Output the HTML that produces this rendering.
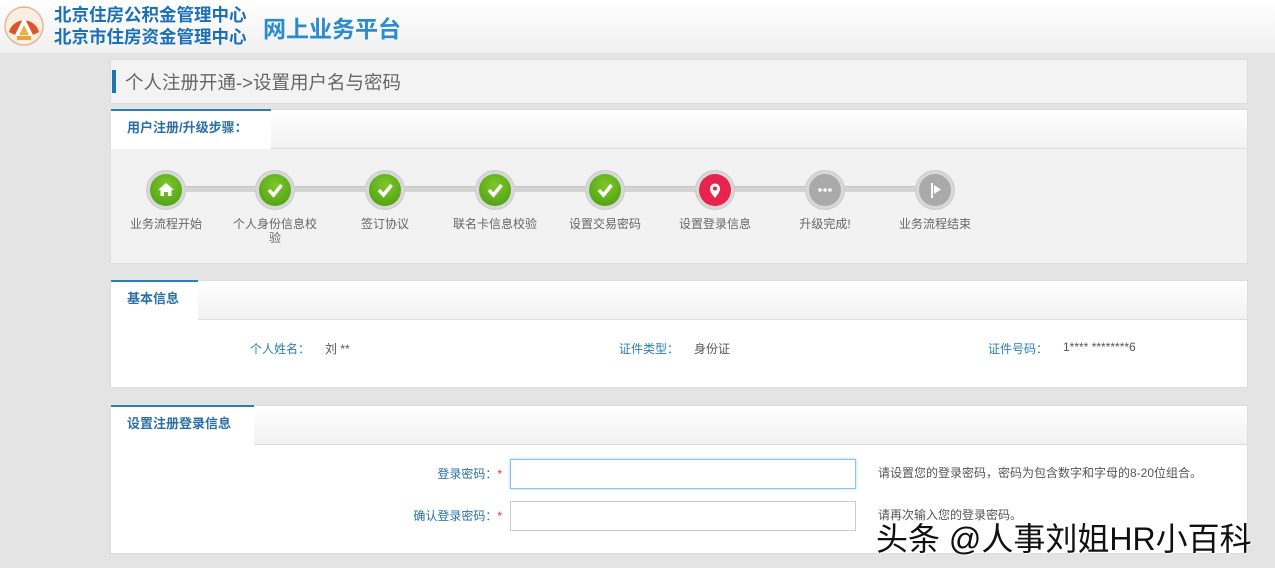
<!DOCTYPE html>
<html><head><meta charset="utf-8"><style>
*{margin:0;padding:0;box-sizing:border-box}
body{width:1275px;height:568px;background:#e4e4e4;font-family:"Liberation Sans","Noto Sans CJK SC",sans-serif;position:relative;overflow:hidden;font-size:12px;color:#555}
.hdr{position:absolute;left:0;top:0;width:1275px;height:54px;background:linear-gradient(#fff,#f0f0f0);border-bottom:1px solid #ddd}
.abs{position:absolute}
.panel{position:absolute;left:110px;width:1138px;background:#fff;border:1px solid #ddd}
.ph{position:absolute;left:0;top:0;right:0;height:39px;background:linear-gradient(#fff,#f2f2f2);border-bottom:1px solid #ddd}
.tab{position:absolute;left:0;top:-1px;height:40px;background:#fff;border-top:2px solid #2a7fb0;color:#2b6fa6;font-weight:bold;font-size:13px;padding:6px 0 0 16px}
.step{position:absolute;top:170px;width:40px;height:40px;border-radius:50%;background:#d8d8d8;border:1px solid #ccc}
.step i{position:absolute;left:3px;top:3px;width:32px;height:32px;border-radius:50%;display:block}
.g{background:radial-gradient(circle at 50% 35%,#7cc82a,#4a9a10)}
.r{background:#e8234d}
.gr{background:#aaa}
.step svg{position:absolute;left:3px;top:3px}
.lbl{position:absolute;top:217px;width:100px;text-align:center;color:#666;font-size:12px;line-height:14px}
.blue{color:#2b7fb5}
input{position:absolute;height:30px;width:346px;border:1px solid #ccc;background:#fff}
</style></head><body>
<div class="hdr">
<svg class="abs" style="left:3px;top:5px" width="42" height="42" viewBox="0 0 42 42"><circle cx="21" cy="21" r="19" fill="#fbeee0" stroke="#e2b79a" stroke-width="1.5"/><path d="M6 27 A15.5 15.5 0 0 1 36 27 L30 30 L21 12 L12 30 Z" fill="#e0522a"/><path d="M12 30 L21 12 L30 30 Z" fill="#fff"/><path d="M16 30 L21 20 L26 30 Z" fill="#e7b340"/><rect x="14" y="31" width="14" height="4" fill="#e5a33a"/></svg>
<div class="abs" style="left:54px;top:4px;font-size:17.5px;font-weight:bold;color:#1b6fb8;line-height:22px">北京住房公积金管理中心<br>北京市住房资金管理中心</div>
<div class="abs" style="left:263px;top:10px;font-size:23px;font-weight:bold;color:#2a8cd0">网上业务平台</div>
</div>
<div class="abs" style="left:110px;top:59px;width:1138px;height:45px;background:#f3f3f3;border:1px solid #ddd"></div>
<div class="abs" style="left:112px;top:70px;width:4px;height:23px;background:#1f74b8"></div>
<div class="abs" style="left:125px;top:69px;font-size:18.5px;color:#666">个人注册开通-&gt;设置用户名与密码</div>

<div class="panel" style="top:109px;height:155px;background:#f2f2f2">
<div class="ph"></div><div class="tab" style="width:160px">用户注册/升级步骤：</div>
</div>
<div class="abs" style="left:166px;top:186px;width:770px;height:6px;background:#d4d4d4;border-top:1px solid #c4c4c4"></div>
<div class="step" style="left:146px"><i class="g"></i><svg width="32" height="32" viewBox="0 0 32 32"><path d="M16 9 L24 16 H21.5 V22 H18 V18 H14 V22 H10.5 V16 H8 Z" fill="#fff"/></svg></div>
<div class="step" style="left:255px"><i class="g"></i><svg width="32" height="32"><path d="M10 16 L14.5 21 L22.5 11" stroke="#fff" stroke-width="3.5" fill="none"/></svg></div>
<div class="step" style="left:365px"><i class="g"></i><svg width="32" height="32"><path d="M10 16 L14.5 21 L22.5 11" stroke="#fff" stroke-width="3.5" fill="none"/></svg></div>
<div class="step" style="left:475px"><i class="g"></i><svg width="32" height="32"><path d="M10 16 L14.5 21 L22.5 11" stroke="#fff" stroke-width="3.5" fill="none"/></svg></div>
<div class="step" style="left:585px"><i class="g"></i><svg width="32" height="32"><path d="M10 16 L14.5 21 L22.5 11" stroke="#fff" stroke-width="3.5" fill="none"/></svg></div>
<div class="step" style="left:695px"><i class="r"></i><svg width="32" height="32"><path d="M16 24 C12 19 11 17 11 14.5 A5 5 0 0 1 21 14.5 C21 17 20 19 16 24 Z" fill="#fff"/><circle cx="16" cy="14.5" r="2" fill="#e8234d"/></svg></div>
<div class="step" style="left:805px"><i class="gr"></i><svg width="32" height="32"><circle cx="11" cy="16" r="1.8" fill="#fff"/><circle cx="16" cy="16" r="1.8" fill="#fff"/><circle cx="21" cy="16" r="1.8" fill="#fff"/></svg></div>
<div class="step" style="left:915px"><i class="gr"></i><svg width="32" height="32"><rect x="12" y="9" width="2" height="15" fill="#fff"/><path d="M15 11 L22 15.5 L15 20 Z" fill="#fff"/></svg></div>
<div class="lbl" style="left:116px">业务流程开始</div>
<div class="lbl" style="left:225px">个人身份信息校<br>验</div>
<div class="lbl" style="left:335px">签订协议</div>
<div class="lbl" style="left:445px">联名卡信息校验</div>
<div class="lbl" style="left:555px">设置交易密码</div>
<div class="lbl" style="left:665px">设置登录信息</div>
<div class="lbl" style="left:775px">升级完成!</div>
<div class="lbl" style="left:885px">业务流程结束</div>

<div class="panel" style="top:280px;height:108px">
<div class="ph"></div><div class="tab" style="width:87px">基本信息</div>
</div>
<div class="abs blue" style="left:250px;top:340px">个人姓名：</div><div class="abs" style="left:325px;top:340px">刘 **</div>
<div class="abs blue" style="left:619px;top:340px">证件类型：</div><div class="abs" style="left:694px;top:340px">身份证</div>
<div class="abs blue" style="left:988px;top:340px">证件号码：</div><div class="abs" style="left:1063px;top:340px">1**** ********6</div>

<div class="panel" style="top:405px;height:149px">
<div class="ph"></div><div class="tab" style="width:143px">设置注册登录信息</div>
</div>
<div class="abs" style="left:380px;top:465px;width:122px;text-align:right;color:#2b6fa6">登录密码：<span style="color:#e33">*</span></div>
<div class="abs" style="left:380px;top:507px;width:122px;text-align:right;color:#2b6fa6">确认登录密码：<span style="color:#e33">*</span></div>
<input style="left:510px;top:459px;border-color:#8cc3e8;box-shadow:0 0 3px #a8d4f0">
<input style="left:510px;top:501px">
<div class="abs" style="left:878px;top:464px;color:#555">请设置您的登录密码，密码为包含数字和字母的8-20位组合。</div>
<div class="abs" style="left:878px;top:506px;color:#555">请再次输入您的登录密码。</div>
<div class="abs" style="left:876px;top:514px;font-size:32px;color:#111;text-shadow:1px 1px 0 #fff,-1px -1px 0 #fff">头条 @人事刘姐HR小百科</div>
</body></html>
